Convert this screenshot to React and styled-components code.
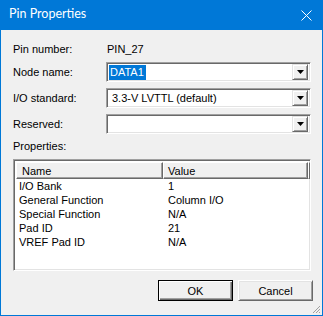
import React from "react";
import styled, { createGlobalStyle, css } from "styled-components";

const Global = createGlobalStyle`
  html, body { margin: 0; padding: 0; background: #f0f0f0; }
  body { font-family: "Liberation Sans", Arial, sans-serif; font-size: 11px; color: #000; }
`;

const Window = styled.div`
  position: relative;
  box-sizing: border-box;
  width: 323px;
  height: 316px;
  border: 1px solid #0078d7;
  border-top: none;
  background: #f0f0f0;
  display: flex;
  flex-direction: column;
  overflow: hidden;
`;

const TitleBar = styled.div`
  height: 30px;
  flex: none;
  margin: 0 -1px;
  background: #0078d7;
  color: #fff;
  display: flex;
  align-items: center;
  justify-content: space-between;
  padding: 0 11px 0 9px;
  font-family: Lato, "Noto Sans", sans-serif;
  font-size: 12.5px;
`;

const Title = styled.span`
  line-height: 1;
  margin-top: -1px;
`;

const Body = styled.div`
  flex: 1;
  display: flex;
  flex-direction: column;
  padding: 0 10px 0 12px;
`;

const Row = styled.div`
  display: flex;
  align-items: center;
  height: ${(p) => p.$h || 20}px;
  margin-top: ${(p) => p.$mt || 0}px;
`;

const Label = styled.div`
  width: 93px;
  flex: none;
`;

const Value = styled.div`
  padding-left: 1px;
`;

const sunken = css`
  box-sizing: border-box;
  border: 1px solid;
  border-color: #a0a0a0 #fff #fff #a0a0a0;
  box-shadow: inset 1px 1px 0 #696969, inset -1px -1px 0 #e3e3e3;
`;

const Combo = styled.div`
  ${sunken};
  width: 205px;
  height: 20px;
  background: #fff;
  display: flex;
  align-items: center;
  padding: 2px;
`;

const ComboText = styled.div`
  flex: 1;
  display: flex;
  align-items: center;
  height: 100%;
  padding-left: ${(p) => (p.$sel ? 0 : 3)}px;
`;

const Selected = styled.span`
  background: #0078d7;
  color: #fff;
  padding: 1px 2px 1px 1px;
  line-height: 13px;
`;

const DropBtn = styled.div`
  box-sizing: border-box;
  width: 16px;
  height: 16px;
  background: #f0f0f0;
  border: 1px solid;
  border-color: #e3e3e3 #696969 #696969 #e3e3e3;
  box-shadow: inset 1px 1px 0 #fff, inset -1px -1px 0 #a0a0a0;
  display: flex;
  align-items: center;
  justify-content: center;
`;

const List = styled.div`
  ${sunken};
  width: 298px;
  height: 112px;
  background: #fff;
  margin-top: 6px;
  padding: 2px;
  display: flex;
  flex-direction: column;
`;

const Header = styled.div`
  display: flex;
  height: 17px;
  flex: none;
`;

const HeadCell = styled.div`
  box-sizing: border-box;
  width: ${(p) => p.$w}px;
  flex: ${(p) => (p.$grow ? 1 : "none")};
  background: #f0f0f0;
  border: 1px solid;
  border-color: #fff #696969 #696969 #fff;
  box-shadow: inset -1px -1px 0 #a0a0a0;
  padding-left: ${(p) => p.$pl || 0}px;
  display: flex;
  align-items: center;
`;

const DataRow = styled.div`
  display: flex;
  height: 14px;
  align-items: center;
`;

const Cell = styled.div`
  width: ${(p) => p.$w}px;
  flex: none;
  padding-left: ${(p) => p.$pl}px;
  box-sizing: border-box;
`;

const Buttons = styled.div`
  display: flex;
  justify-content: flex-end;
  gap: 5px;
  margin-top: 9px;
  margin-right: -1px;
`;

const Button = styled.div`
  box-sizing: border-box;
  width: 75px;
  height: 21px;
  background: #f0f0f0;
  display: flex;
  align-items: center;
  justify-content: center;
  border: 1px solid;
  ${(p) =>
    p.$default
      ? css`
          border-color: #000;
          box-shadow: inset 1px 1px 0 #fff, inset -1px -1px 0 #696969,
            inset -2px -2px 0 #a0a0a0;
        `
      : css`
          border-color: #fff #696969 #696969 #fff;
          box-shadow: inset 1px 1px 0 #e3e3e3, inset -1px -1px 0 #a0a0a0;
        `}
`;

const Grip = styled.svg`
  position: absolute;
  right: 1px;
  bottom: 1px;
`;

const Arrow = () => (
  <svg width="7" height="4" viewBox="0 0 7 4">
    <path d="M0 0h7L3.5 4z" fill="#000" />
  </svg>
);

const Close = () => (
  <svg width="11" height="11" viewBox="0 0 11 11">
    <path d="M0.5 0.5L10.5 10.5M10.5 0.5L0.5 10.5" stroke="#fff" strokeWidth="1" />
  </svg>
);

const rows = [
  ["I/O Bank", "1"],
  ["General Function", "Column I/O"],
  ["Special Function", "N/A"],
  ["Pad ID", "21"],
  ["VREF Pad ID", "N/A"],
];

export default function App() {
  return (
    <>
      <Global />
      <Window>
        <TitleBar>
          <Title>Pin Properties</Title>
          <Close />
        </TitleBar>
        <Body>
          <Row $mt={9}>
            <Label>Pin number:</Label>
            <Value>PIN_27</Value>
          </Row>
          <Row $mt={3}>
            <Label>Node name:</Label>
            <Combo>
              <ComboText $sel>
                <Selected>DATA1</Selected>
              </ComboText>
              <DropBtn>
                <Arrow />
              </DropBtn>
            </Combo>
          </Row>
          <Row $mt={6}>
            <Label>I/O standard:</Label>
            <Combo>
              <ComboText>3.3-V LVTTL (default)</ComboText>
              <DropBtn>
                <Arrow />
              </DropBtn>
            </Combo>
          </Row>
          <Row $mt={6}>
            <Label>Reserved:</Label>
            <Combo>
              <ComboText />
              <DropBtn>
                <Arrow />
              </DropBtn>
            </Combo>
          </Row>
          <Row $mt={5} $h={14}>
            <Label>Properties:</Label>
          </Row>
          <List>
            <Header>
              <HeadCell $w={147} $pl={5}>Name</HeadCell>
              <HeadCell $w={145} $pl={4}>Value</HeadCell>
              <HeadCell $grow />
            </Header>
            {rows.map(([n, v]) => (
              <DataRow key={n}>
                <Cell $w={147} $pl={3}>{n}</Cell>
                <Cell $w={145} $pl={5}>{v}</Cell>
              </DataRow>
            ))}
          </List>
          <Buttons>
            <Button $default>OK</Button>
            <Button>Cancel</Button>
          </Buttons>
        </Body>
        <Grip width="10" height="10" viewBox="0 0 10 10">
          <path d="M9 2L2 9M9 5L5 9M9 8L8 9" stroke="#a0a0a0" strokeWidth="1" />
        </Grip>
      </Window>
    </>
  );
}
